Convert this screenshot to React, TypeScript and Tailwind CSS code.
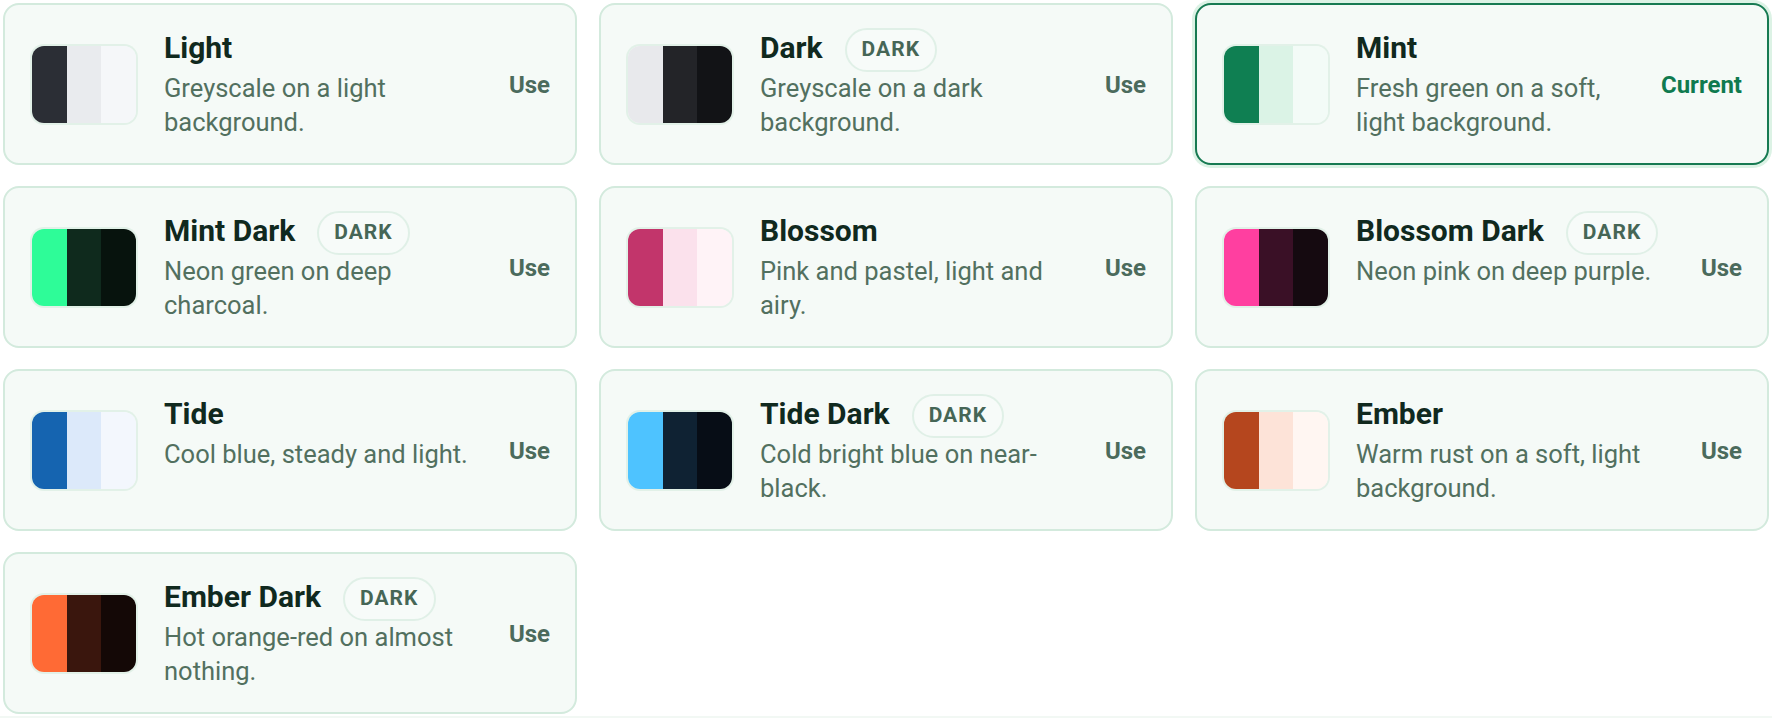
import React from 'react';

interface Theme {
  name: string;
  description: string;
  colors: [string, string, string];
  dark?: boolean;
  current?: boolean;
}

const themes: Theme[] = [
  { name: 'Light', description: 'Greyscale on a light background.', colors: ['#2b2e35', '#e9ebee', '#f5f7f9'] },
  { name: 'Dark', description: 'Greyscale on a dark background.', colors: ['#e8e9ec', '#232428', '#121316'], dark: true },
  { name: 'Mint', description: 'Fresh green on a soft, light background.', colors: ['#0f7f52', '#dbf3e6', '#f3fbf7'], current: true },
  { name: 'Mint Dark', description: 'Neon green on deep charcoal.', colors: ['#2efc98', '#0f2a1d', '#07130d'], dark: true },
  { name: 'Blossom', description: 'Pink and pastel, light and airy.', colors: ['#c2356b', '#fbe1ec', '#fff3f7'] },
  { name: 'Blossom Dark', description: 'Neon pink on deep purple.', colors: ['#ff3fa0', '#3a1026', '#150a10'], dark: true },
  { name: 'Tide', description: 'Cool blue, steady and light.', colors: ['#1564b0', '#dce9fa', '#f3f7fd'] },
  { name: 'Tide Dark', description: 'Cold bright blue on near-black.', colors: ['#4ec3ff', '#0f2233', '#070d16'], dark: true },
  { name: 'Ember', description: 'Warm rust on a soft, light background.', colors: ['#b5461e', '#fde3d8', '#fff6f2'] },
  { name: 'Ember Dark', description: 'Hot orange-red on almost nothing.', colors: ['#ff6a35', '#3a160d', '#140806'], dark: true },
];

function Swatch({ colors }: { colors: [string, string, string] }) {
  return (
    <div className="flex h-[77px] w-[104px] shrink-0 overflow-hidden rounded-[12px] ring-2 ring-[#e2f1e8]">
      {colors.map((c) => (
        <div key={c} className="flex-1" style={{ backgroundColor: c }} />
      ))}
    </div>
  );
}

function ThemeCard({ theme }: { theme: Theme }) {
  return (
    <div
      className={
        theme.current
          ? 'flex items-center rounded-[16px] border-2 border-[#177a52] bg-[#f5faf7] pt-[25px] pb-[24px] pl-[27px] pr-[25px] ring-[3px] ring-[#dcf2e5]'
          : 'flex items-center rounded-[16px] border-2 border-[#d3eadd] bg-[#f5faf7] pt-[25px] pb-[24px] pl-[27px] pr-[25px]'
      }
    >
      <Swatch colors={theme.colors} />
      <div className="ml-[28px] min-w-0 flex-1 self-start">
        <div className="flex h-[36px] items-center gap-[22px]">
          <h3 className="text-[30px] font-bold leading-[36px] text-[#10291e]">{theme.name}</h3>
          {theme.dark && (
            <span className="flex h-[44px] translate-y-[2px] items-center rounded-full border-2 border-[#e0f0e7] bg-[#f7fbf9] px-[15px] text-[21px] font-bold tracking-[0.05em] text-[#466656]">
              DARK
            </span>
          )}
        </div>
        <p className="mt-[5px] text-[25.5px] leading-[34px] text-[#52705f]">{theme.description}</p>
      </div>
      {theme.current ? (
        <span className="ml-[24px] shrink-0 text-[24px] font-bold text-[#0f7a4f]">Current</span>
      ) : (
        <button type="button" className="ml-[24px] shrink-0 text-[24px] font-bold text-[#4b6b5c]">
          Use
        </button>
      )}
    </div>
  );
}

export default function App() {
  return (
    <div className="h-[718px] w-full overflow-hidden bg-[#f2f8f4]" style={{ fontFamily: 'Roboto, "Noto Sans", sans-serif' }}>
      <div className="grid grid-cols-3 gap-x-[22px] gap-y-[21px] bg-white p-[3px] pb-[2px]">
        {themes.map((t) => (
          <ThemeCard key={t.name} theme={t} />
        ))}
      </div>
    </div>
  );
}
